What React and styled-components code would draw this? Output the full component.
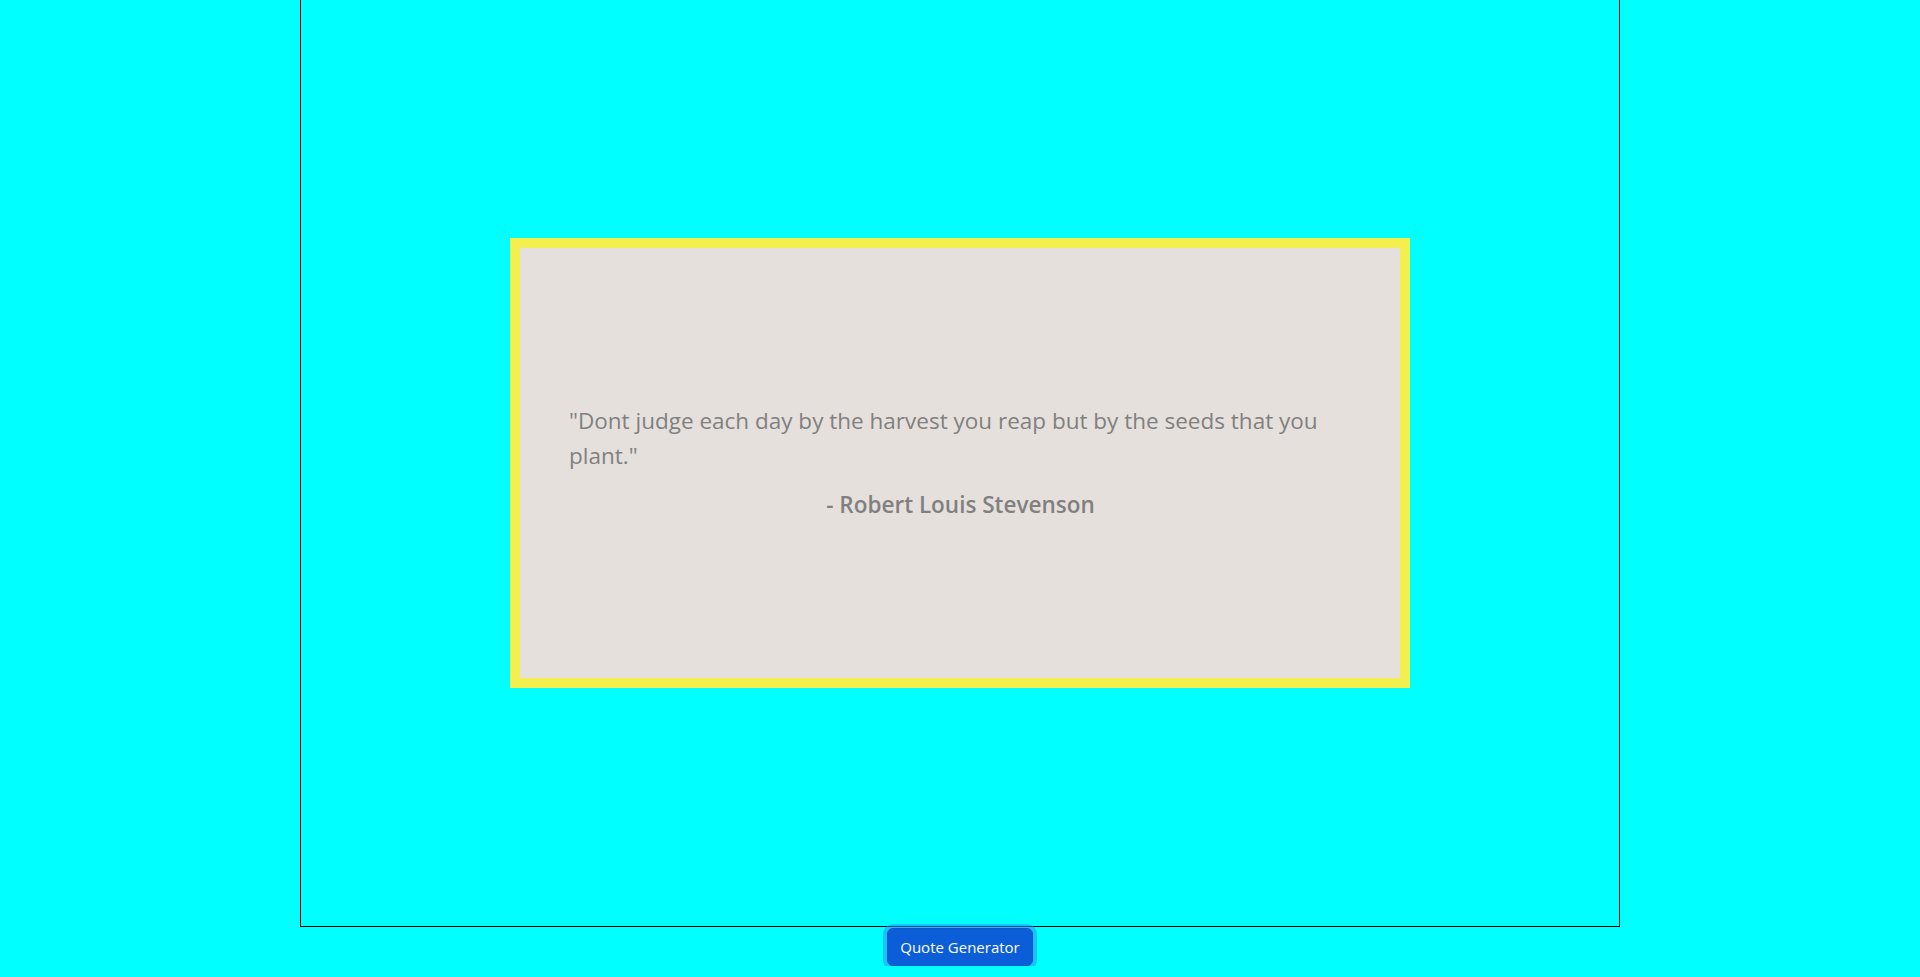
import styled, { createGlobalStyle } from "styled-components";

const GlobalStyle = createGlobalStyle`
  body {
    margin: 0;
    background: #00ffff;
    font-family: "Open Sans", "Noto Sans", sans-serif;
  }
`;

const Page = styled.div`
  display: flex;
  flex-direction: column;
  align-items: center;
`;

const Frame = styled.div`
  box-sizing: border-box;
  width: 1320px;
  height: 927px;
  border: 1px solid #000;
  border-top: none;
  display: flex;
  align-items: center;
  justify-content: center;
`;

const Card = styled.div`
  box-sizing: border-box;
  width: 900px;
  height: 450px;
  border: 10px solid #f2ef4f;
  background: #e6e0dd;
  padding: 0 48px 2px 49px;
  display: flex;
  flex-direction: column;
  justify-content: center;
  color: #808080;
`;

const Quote = styled.p`
  margin: 0;
  font-size: 22.5px;
  line-height: 35px;
`;

const Author = styled.p`
  margin: 14px 0 0;
  text-align: center;
  font-size: 22.5px;
  line-height: 35px;
  font-weight: 600;
`;

const Button = styled.button`
  box-sizing: border-box;
  height: 38px;
  margin-top: 1px;
  padding: 0 12px;
  font-family: "Open Sans", "Noto Sans", sans-serif;
  font-size: 15px;
  color: #fff;
  background: #0b5ed7;
  border: 1px solid #0a58ca;
  border-radius: 6px;
  box-shadow: 0 0 0 4px rgba(49, 132, 253, 0.5);
  cursor: pointer;
`;

export default function App() {
  return (
    <Page>
      <GlobalStyle />
      <Frame>
        <Card>
          <Quote>
            "Dont judge each day by the harvest you reap but by the seeds that you plant."
          </Quote>
          <Author>- Robert Louis Stevenson</Author>
        </Card>
      </Frame>
      <Button>Quote Generator</Button>
    </Page>
  );
}
